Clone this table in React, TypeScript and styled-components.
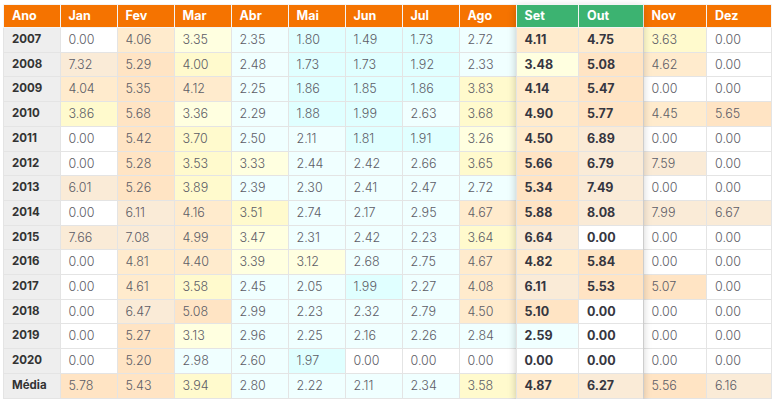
import React from "react";
import styled, { createGlobalStyle } from "styled-components";

const GlobalStyle = createGlobalStyle`
  body {
    margin: 0;
    background: #ffffff;
    font-family: Inter, "Open Sans", sans-serif;
  }
`;

const months = ["Jan", "Fev", "Mar", "Abr", "Mai", "Jun", "Jul", "Ago", "Set", "Out", "Nov", "Dez"];
const colWidths = [56.5, 57, 57, 57, 57, 57, 57, 57, 57, 62.5, 64.5, 63.5, 65];
const highlighted = [8, 9];

const rows: [string, number[]][] = [
  ["2007", [0.0, 4.06, 3.35, 2.35, 1.8, 1.49, 1.73, 2.72, 4.11, 4.75, 3.63, 0.0]],
  ["2008", [7.32, 5.29, 4.0, 2.48, 1.73, 1.73, 1.92, 2.33, 3.48, 5.08, 4.62, 0.0]],
  ["2009", [4.04, 5.35, 4.12, 2.25, 1.86, 1.85, 1.86, 3.83, 4.14, 5.47, 0.0, 0.0]],
  ["2010", [3.86, 5.68, 3.36, 2.29, 1.88, 1.99, 2.63, 3.68, 4.9, 5.77, 4.45, 5.65]],
  ["2011", [0.0, 5.42, 3.7, 2.5, 2.11, 1.81, 1.91, 3.26, 4.5, 6.89, 0.0, 0.0]],
  ["2012", [0.0, 5.28, 3.53, 3.33, 2.44, 2.42, 2.66, 3.65, 5.66, 6.79, 7.59, 0.0]],
  ["2013", [6.01, 5.26, 3.89, 2.39, 2.3, 2.41, 2.47, 2.72, 5.34, 7.49, 0.0, 0.0]],
  ["2014", [0.0, 6.11, 4.16, 3.51, 2.74, 2.17, 2.95, 4.67, 5.88, 8.08, 7.99, 6.67]],
  ["2015", [7.66, 7.08, 4.99, 3.47, 2.31, 2.42, 2.23, 3.64, 6.64, 0.0, 0.0, 0.0]],
  ["2016", [0.0, 4.81, 4.4, 3.39, 3.12, 2.68, 2.75, 4.67, 4.82, 5.84, 0.0, 0.0]],
  ["2017", [0.0, 4.61, 3.58, 2.45, 2.05, 1.99, 2.27, 4.08, 6.11, 5.53, 5.07, 0.0]],
  ["2018", [0.0, 6.47, 5.08, 2.99, 2.23, 2.32, 2.79, 4.5, 5.1, 0.0, 0.0, 0.0]],
  ["2019", [0.0, 5.27, 3.13, 2.96, 2.25, 2.16, 2.26, 2.84, 2.59, 0.0, 0.0, 0.0]],
  ["2020", [0.0, 5.2, 2.98, 2.6, 1.97, 0.0, 0.0, 0.0, 0.0, 0.0, 0.0, 0.0]],
  ["Média", [5.78, 5.43, 3.94, 2.8, 2.22, 2.11, 2.34, 3.58, 4.87, 6.27, 5.56, 6.16]],
];

const heat = (v: number) => {
  if (v === 0) return "#ffffff";
  if (v < 2) return "#e0ffff";
  if (v < 3) return "#f0ffff";
  if (v < 3.5) return "#ffffe0";
  if (v <= 4) return "#fffacd";
  if (v < 5) return "#ffebcd";
  if (v < 6) return "#ffe4c4";
  return "#faebd7";
};

const Page = styled.div`
  padding: 4px 2px 0 3px;
`;

const Frame = styled.div`
  position: relative;
  width: 768px;
`;

const Grid = styled.table`
  width: 768px;
  table-layout: fixed;
  border-collapse: collapse;
  border: 1px solid #e4e4e4;
  font-size: 12.5px;
`;

const HeadCell = styled.th<{ $green?: boolean }>`
  background: ${(p) => (p.$green ? "#3cb371" : "#f57300")};
  color: #ffffff;
  font-weight: 700;
  text-align: left;
  padding: 3px 8px;
  line-height: 16px;
  border: 1px solid #f4f4f4;
`;

const YearCell = styled.td`
  background: #eeeeee;
  color: #333333;
  font-weight: 700;
  font-size: 11.5px;
  padding: 4px 8px;
  line-height: 15.7px;
  border: 1px solid #e4e4e4;
`;

const ValueCell = styled.td<{ $bold?: boolean }>`
  color: ${(p) => (p.$bold ? "#363640" : "#5c5c66")};
  font-weight: ${(p) => (p.$bold ? 700 : 300)};
  padding: 4px 8px;
  line-height: 15.7px;
  border: 1px solid #e4e4e4;
  white-space: nowrap;
`;

const Lift = styled.div`
  position: absolute;
  top: 0;
  bottom: 0;
  pointer-events: none;
  box-shadow: 0 3px 8px rgba(0, 0, 0, 0.22);
`;

export default function App() {
  const liftLeft = colWidths.slice(0, highlighted[0] + 1).reduce((a, b) => a + b, 0);
  const liftWidth = highlighted.reduce((a, i) => a + colWidths[i + 1], 0);
  return (
    <Page>
      <GlobalStyle />
      <Frame>
        <Grid>
          <colgroup>
            {colWidths.map((w, i) => (
              <col key={i} style={{ width: w }} />
            ))}
          </colgroup>
          <thead>
            <tr>
              <HeadCell>Ano</HeadCell>
              {months.map((m, i) => (
                <HeadCell key={m} $green={highlighted.includes(i)}>
                  {m}
                </HeadCell>
              ))}
            </tr>
          </thead>
          <tbody>
            {rows.map(([year, values]) => (
              <tr key={year}>
                <YearCell>{year}</YearCell>
                {values.map((v, i) => (
                  <ValueCell
                    key={i}
                    $bold={highlighted.includes(i)}
                    style={{ background: heat(v) }}
                  >
                    {v.toFixed(2)}
                  </ValueCell>
                ))}
              </tr>
            ))}
          </tbody>
        </Grid>
        <Lift style={{ left: liftLeft, width: liftWidth }} />
      </Frame>
    </Page>
  );
}
